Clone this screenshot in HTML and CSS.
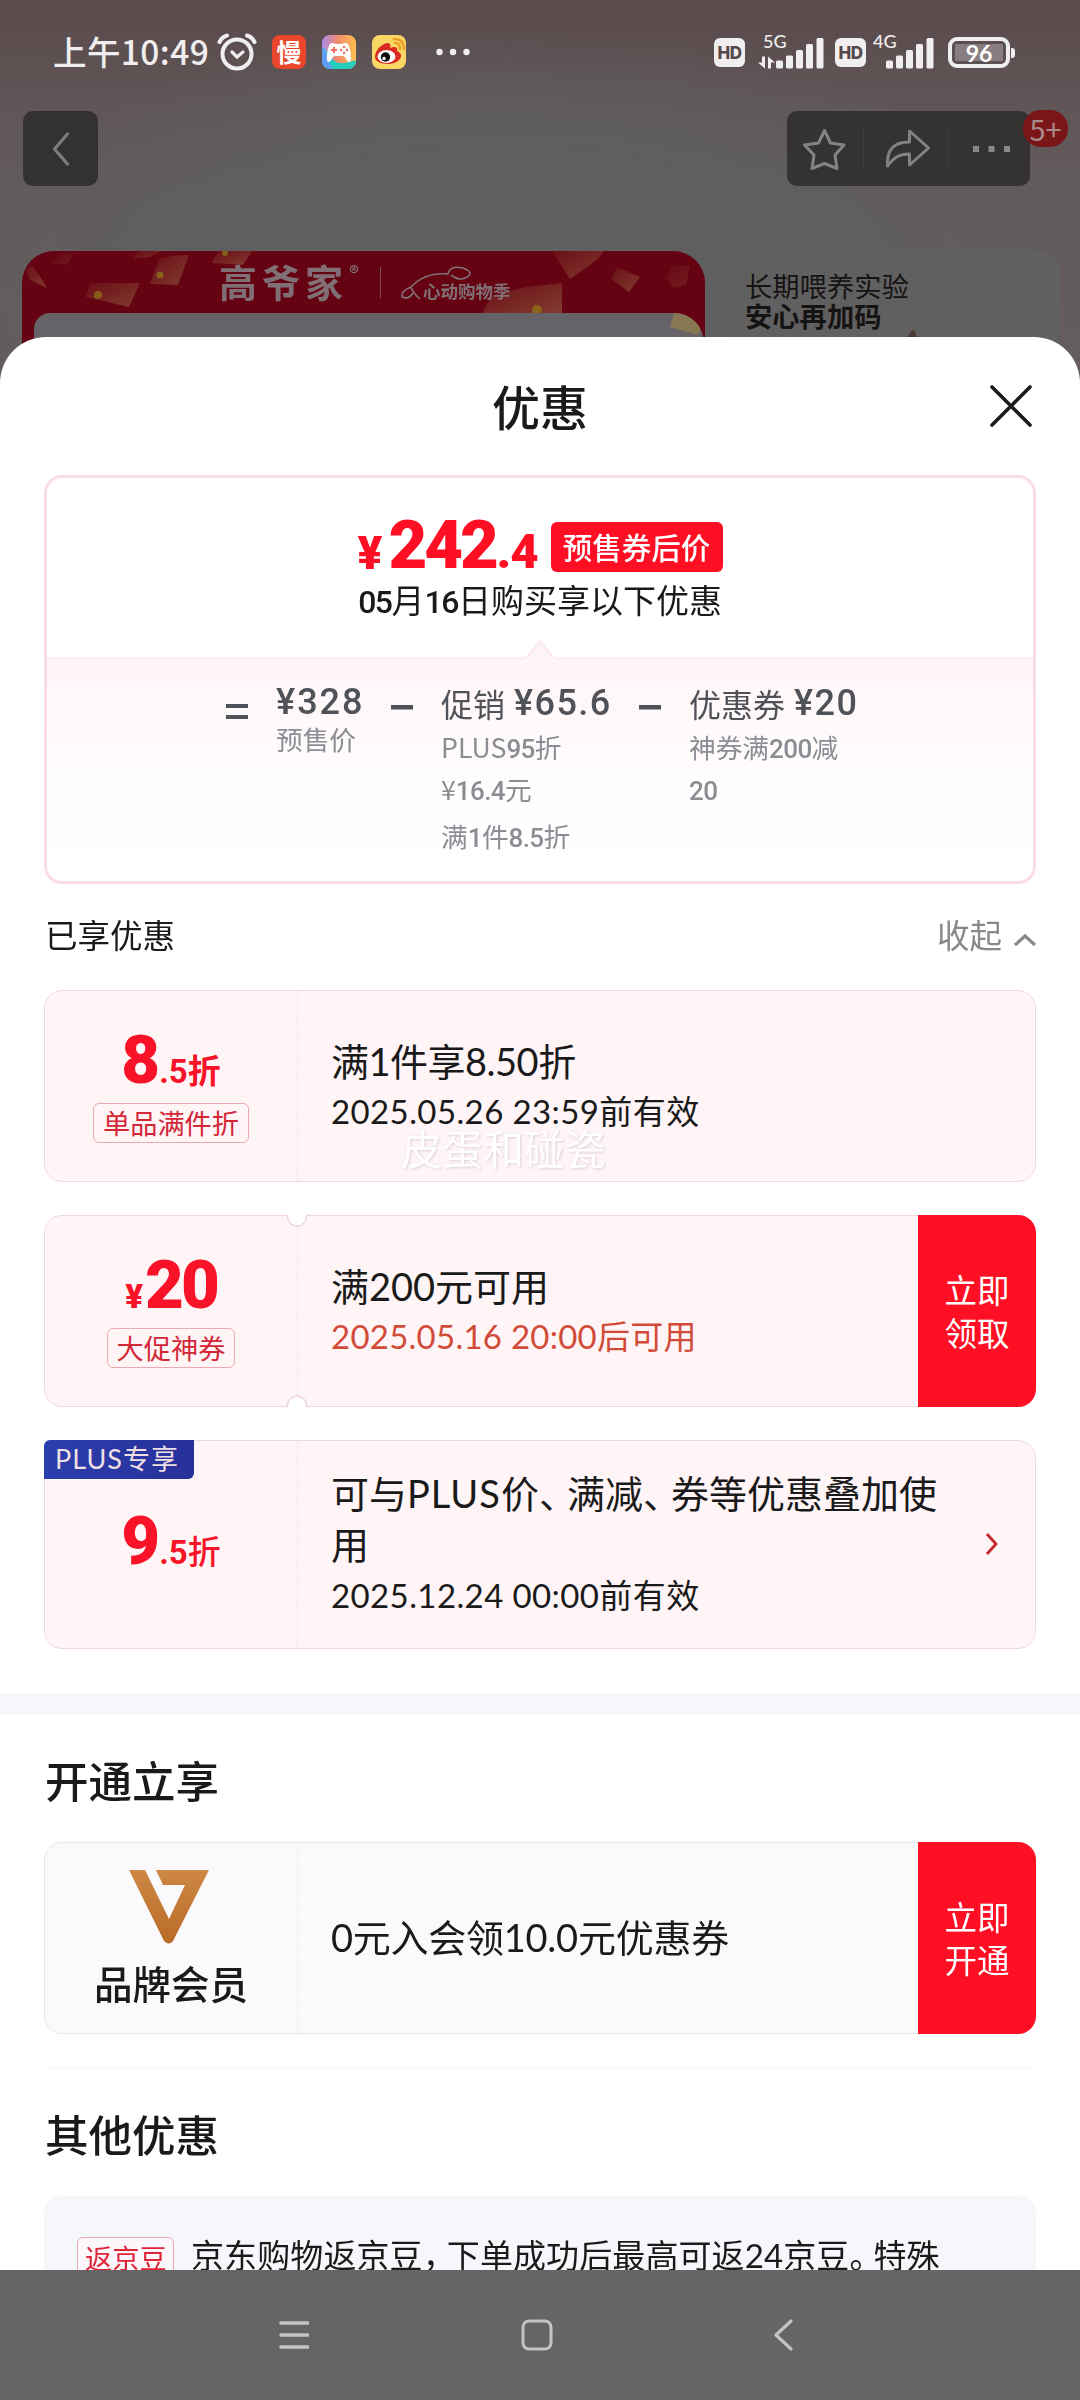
FILE: index.html
```html
<!DOCTYPE html>
<html lang="zh-CN">
<head>
<meta charset="utf-8">
<title>优惠</title>
<link rel="stylesheet" href="styles.css">
</head>
<body>
<div class="screen">
  <div class="backdrop">
    <header class="status">
      <div class="status-left">
        <span class="time">上午10:49</span>
        <svg class="alarm" width="40" height="38" viewBox="0 0 40 38" fill="none" stroke="#f0eeee" stroke-linecap="round"><circle cx="20" cy="21" r="14.5" stroke-width="4"/><path d="M2.5 9Q5 4 10 2.5M37.500 9Q35 4 30 2.500" stroke-width="4"/><path d="M15 19l5 5 6-5" stroke-width="3.200"/></svg>
        <span class="app app-slow">慢</span>
        <svg class="app" viewBox="0 0 34 34"><defs><linearGradient id="game" x1="0" y1="0" x2="1" y2="0"><stop offset="0" stop-color="#a98df0"/><stop offset=".45" stop-color="#f08a70"/><stop offset="1" stop-color="#ffbf4e"/></linearGradient></defs><rect width="34" height="34" rx="8" fill="url(#game)"/><path d="M0 13C6 13 7 27 18 28C26 29 30 25 34 26A8 8 0 0 1 26 34H8A8 8 0 0 1 0 26Z" fill="#25cdbd"/><path d="M0 12C5 14 5 25 11 34H8A8 8 0 0 1 0 26Z" fill="#5d9df5"/><path d="M10 8Q17 10 24 8C29 8 30 27 28 27C25 28 24 21 21 21H13C10 21 9 28 6 27C4 27 5 8 10 8Z" fill="#fff"/><path d="M9 15h6M12 12v6" stroke="#ef6a5a" stroke-width="2"/><g fill="#ef6a5a"><circle cx="22" cy="12" r="1.200"/><circle cx="22" cy="18" r="1.200"/><circle cx="19" cy="15" r="1.200"/><circle cx="25" cy="15" r="1.200"/></g></svg>
        <svg class="app" viewBox="0 0 34 34"><rect width="34" height="34" rx="8" fill="#f9d765"/><path d="M3 22C3 13 15 5 18 9C19 11 18 12 18 13C23 11 26 12 25 16C34 20 27 29 16 29C8 29 3 26 3 22Z" fill="#db2a22"/><ellipse cx="14.500" cy="21.500" rx="9" ry="6.500" fill="#fff"/><circle cx="13.500" cy="22" r="4.700" fill="#111"/><circle cx="12" cy="23.500" r="1.700" fill="#fff"/><path d="M23 8q5 0 5 6M22 4q10 0 10 10" fill="none" stroke="#eea02c" stroke-width="2.500" stroke-linecap="round"/></svg>
        <svg class="more" width="34" height="8" viewBox="0 0 34 8" fill="#f0eeee"><circle cx="3.500" cy="4" r="3.200"/><circle cx="17" cy="4" r="3.200"/><circle cx="30.500" cy="4" r="3.200"/></svg>
      </div>
      <div class="status-right">
        <span class="hd">HD</span>
        <span class="signal sig-a"><b>5G</b><svg width="68" height="33" viewBox="0 0 68 33" fill="#f0eeee"><path d="M5 20.500h3v12L1 26.500h4zM11 32.500V20.500l7 6h-4v6z"/><rect x="19" y="24.500" width="7" height="8" rx="1.500"/><rect x="29" y="19.500" width="7" height="13" rx="1.500"/><rect x="39" y="14" width="7" height="18.500" rx="1.500"/><rect x="49" y="8" width="7" height="24.500" rx="1.500"/><rect x="59.500" y="2" width="7" height="30.500" rx="1.500"/></svg></span>
        <span class="hd">HD</span>
        <span class="signal sig-b"><b>4G</b><svg width="68" height="33" viewBox="0 0 68 33" fill="#f0eeee"><rect x="19" y="24.500" width="7" height="8" rx="1.500"/><rect x="29" y="19.500" width="7" height="13" rx="1.500"/><rect x="39" y="14" width="7" height="18.500" rx="1.500"/><rect x="49" y="8" width="7" height="24.500" rx="1.500"/><rect x="59.500" y="2" width="7" height="30.500" rx="1.500"/></svg></span>
        <span class="battery"><i>96</i></span>
      </div>
    </header>
    <div class="toolbar">
      <div class="tool-back"><svg width="18" height="34" viewBox="0 0 18 34" fill="none" stroke="#7d7b7b" stroke-width="3.200" stroke-linecap="round" stroke-linejoin="round"><path d="M15.500 2L2.500 17l13 15"/></svg></div>
      <div class="tools">
        <svg class="tool" viewBox="0 0 76 75" fill="none" stroke="#858282" stroke-width="3" stroke-linejoin="round"><path d="M37.500 19.500L43.500 32L57 34L48 44L50 57.500L37.500 52.500L25 57.500L27 44L17.500 34L31.500 32Z"/></svg>
        <svg class="tool tool-share" viewBox="0 0 84 75" fill="none" stroke="#858282" stroke-width="3" stroke-linejoin="round"><path d="M46 20L65 37L46 54V43C35 43 30 47 24 55C23 39 30 31 46 31Z"/></svg>
        <svg class="tool tool-more" viewBox="0 0 82 75" fill="#8a8787"><path d="M25 35h6v6h-6zM40.500 35h6v6h-6zM56 35h6v6h-6z"/></svg>
        <span class="count">5+</span>
      </div>
    </div>
    <div class="feed">
      <div class="banner">
        <svg class="confetti" width="683" height="150" viewBox="0 0 683 150"><defs><linearGradient id="gold" x1="0" y1="0" x2="1" y2="1"><stop offset="0" stop-color="#6c1218"/><stop offset="1" stop-color="#8a4a38"/></linearGradient></defs><g fill="url(#gold)" opacity=".8"><path d="M64 46L68 32L118 32L107 56Z"/><path d="M128 33L137 8Q150 4 167 4L156 34Z"/><path d="M110 8L117 0H140L128 6Z" opacity=".7"/><path d="M190 12L196 0H230L221 14Z"/><path d="M4 18L10 14L19 27L25 37L8 29Z"/><path d="M30 12L40 3L52 2L44 14Z" opacity=".4"/><path d="M460 62L470 44L505 36L540 32V62Z"/><path d="M530 0H582L576 8L548 28Z"/><path d="M589 28L595 16L618 26L607 41Z"/><path d="M644 28L650 14L668 15L664 34L652 37Z" opacity=".5"/></g><g fill="#8c7018" opacity=".8"><circle cx="76" cy="44" r="4"/><circle cx="138" cy="24" r="3.500"/><circle cx="203" cy="2" r="3"/><circle cx="515" cy="59" r="5"/></g></svg>
        <div class="brand"><strong>高爷家</strong><sup>®</sup><span class="rule"></span><span class="season"><svg width="82" height="36" viewBox="0 0 82 36" fill="none" stroke="#807078" stroke-width="1.600"><path d="M19 34Q12 28 10 22Q0 26 1 32Q8 35 12 28M10 22Q24 7 47 9Q49 0 62 3Q75 8 64 13Q58 16 50 10"/></svg><em>心动购物季</em></span></div>
        <div class="banner-panel"><svg width="34" height="24" viewBox="0 0 34 24"><path d="M4 0H20L32 12L28 22L0 14Z" fill="#877753"/></svg></div>
      </div>
      <div class="promo"><p>长期喂养实验</p><strong>安心再加码</strong><svg width="14" height="12" viewBox="0 0 14 12"><path d="M0 12Q4 0 8 1L13 12Z" fill="#4b3c36"/></svg></div>
    </div>
  </div>

  <main class="sheet">
    <div class="sheet-head"><h1>优惠</h1><svg class="close" width="44" height="44" viewBox="0 0 44 44" fill="none" stroke="#1a1a1a" stroke-width="3.600" stroke-linecap="round"><path d="M3 3l38 38M41 3L3 41"/></svg></div>

    <section class="summary">
      <div class="final"><span class="final-yen">¥</span><span class="final-int">242</span><span class="final-dec">.4</span><span class="final-tag">预售券后价</span></div>
      <p class="when"><b>05</b>月<b>16</b>日购买享以下优惠</p>
      <div class="formula">
        <svg class="pointer" width="32" height="21" viewBox="0 0 32 21"><path d="M1 20L16 2L31 20" fill="#fef3f5" stroke="#fdeaee" stroke-width="2"/><path d="M0 20h32" stroke="#fef2f5" stroke-width="3"/></svg>
        <span class="op op-eq"><svg width="24" height="18" viewBox="0 0 24 18" fill="#505259"><path d="M1 1h22v4H1zM1 12h22v4H1z"/></svg></span>
        <div class="term"><p class="amount"><b>¥328</b></p><p class="note">预售价</p></div>
        <span class="op"><svg width="22" height="5" viewBox="0 0 22 5"><path d="M0 0h22v4.500H0z" fill="#505259"/></svg></span>
        <div class="term term-b"><p class="amount">促销<b>¥65.6</b></p><p class="note">PLUS<b>95</b>折</p><p class="note">¥<b>16.4</b>元</p><p class="note note-last">满<b>1</b>件<b>8.5</b>折</p></div>
        <span class="op"><svg width="22" height="5" viewBox="0 0 22 5"><path d="M0 0h22v4.500H0z" fill="#505259"/></svg></span>
        <div class="term term-b"><p class="amount">优惠券<b>¥20</b></p><p class="note">神券满<b>200</b>减</p><p class="note"><b>20</b></p></div>
      </div>
    </section>

    <div class="list-head"><span>已享优惠</span><span class="fold">收起<svg width="24" height="14" viewBox="0 0 24 14" fill="none" stroke="#888" stroke-width="3.200"><path d="M2 12L12 3l10 9"/></svg></span></div>

    <article class="coupon">
      <div class="face"><div class="value"><b>8</b><small>.5折</small></div><span class="label">单品满件折</span></div>
      <div class="info"><h3 class="tight">满1件享8.50折</h3><p>2025.05.26 23:59前有效</p></div>
      <span class="watermark">皮蛋和碰瓷</span>
    </article>

    <article class="coupon notched">
      <div class="face"><div class="value"><small class="yen">¥</small><b>20</b></div><span class="label">大促神券</span></div>
      <div class="info"><h3>满200元可用</h3><p class="pending">2025.05.16 20:00后可用</p></div>
      <div class="action"><span>立即</span><span>领取</span></div>
      <svg class="notch notch-top" width="22" height="14" viewBox="0 0 22 14"><path d="M0 0V1.500Q1 1.500 1.500 3.500A9.500 9.500 0 0 0 20.500 3.500Q21 1.500 22 1.500V0Z" fill="#fff"/><path d="M0 1.800Q1 1.800 1.500 3.500A9.500 9.500 0 0 0 20.500 3.500Q21 1.800 22 1.800" fill="none" stroke="#f0d4da" stroke-width="1.500"/></svg>
      <svg class="notch notch-bottom" width="22" height="14" viewBox="0 0 22 14"><path d="M0 0V1.500Q1 1.500 1.500 3.500A9.500 9.500 0 0 0 20.500 3.500Q21 1.500 22 1.500V0Z" fill="#fff"/><path d="M0 1.800Q1 1.800 1.500 3.500A9.500 9.500 0 0 0 20.500 3.500Q21 1.800 22 1.800" fill="none" stroke="#f0d4da" stroke-width="1.500"/></svg>
    </article>

    <article class="coupon tall">
      <span class="flag">PLUS专享</span>
      <div class="face"><div class="value"><b>9</b><small>.5<i>折</i></small></div></div>
      <div class="info"><h3>可与<span class="wide">PLUS</span>价<span class="pause">、</span>满减<span class="pause">、</span>券等优惠叠加使用</h3><p>2025.12.24 00:00前有效</p></div>
      <svg class="go" width="14" height="24" viewBox="0 0 14 24" fill="none" stroke="#c4242c" stroke-width="2.800"><path d="M2 2l9 10-9 10"/></svg>
    </article>

    <div class="band"></div>

    <h2 class="title-open">开通立享</h2>
    <article class="coupon member">
      <div class="face"><svg class="v" width="80" height="75" viewBox="0 0 80 75"><defs><linearGradient id="bronze" x1="0" y1="0" x2="0" y2="1"><stop offset="0" stop-color="#cd8844"/><stop offset="1" stop-color="#b96b28"/></linearGradient></defs><path d="M0 0H16L40 49L56 15H34L27 0H80L44 71Q40 76 35 71Z" fill="url(#bronze)"/></svg><strong>品牌会员</strong></div>
      <div class="info"><h3 class="snug">0元入会领10.0元优惠券</h3></div>
      <div class="action"><span>立即</span><span>开通</span></div>
    </article>
    <hr>
    <h2 class="title-other">其他优惠</h2>
    <div class="other"><span class="label">返京豆</span><p>京东购物返京豆<span class="stop">，</span>下单成功后最高可返24京豆<span class="stop">。</span>特殊</p></div>
  </main>

  <nav class="nav">
    <svg width="32" height="32" viewBox="0 0 32 32" stroke="#c4c4c4" stroke-width="3.500" stroke-linecap="round"><path d="M4 4h27M4 16h27M4 28h27"/></svg>
    <svg width="32" height="32" viewBox="0 0 32 32" fill="none" stroke="#c4c4c4" stroke-width="3"><rect x="2" y="2" width="28" height="28" rx="6"/></svg>
    <svg width="32" height="32" viewBox="0 0 32 32" fill="none" stroke="#c4c4c4" stroke-width="3.200" stroke-linecap="round" stroke-linejoin="round"><path d="M26 2L11 16l15 14"/></svg>
  </nav>
</div>
</body>
</html>
```

FILE: styles.css
```css
* { box-sizing: border-box; margin: 0; padding: 0; }
body { width: 1080px; height: 2400px; overflow: hidden; font-family: Lato, "Noto Sans CJK SC", sans-serif; color: #1a1a1a; background: #656565; }
svg { display: block; flex: none; }
.screen { display: flex; flex-direction: column; height: 2400px; }

/* dimmed page behind the sheet */
.backdrop { flex: none; height: 400px; overflow: hidden; background: radial-gradient(ellipse 560px 260px at 500px 290px, #5f5f5f 0 50%, rgba(95,95,95,0) 100%), linear-gradient(#5a4a4c, #605657 110px, #625b5c 200px, #645c5e); }
.status { display: flex; justify-content: space-between; height: 104px; padding: 0 66px 0 53px; align-items: center; color: #f0eeee; }
.status-left, .status-right { display: flex; align-items: center; height: 36px; }
.time { width: 157px; font-size: 33.500px; line-height: 34px; margin-top: -2px; letter-spacing: .4px; white-space: nowrap; font-weight: 500; font-family: "Noto Sans CJK SC", sans-serif; }
.alarm { margin-left: 7px; }
.app { width: 34px; height: 34px; margin-left: 16px; }
.alarm + .app { margin-left: 15px; }
.app-slow { border-radius: 8px; background: #e9462c; color: #fff; font: 700 25px/33px "Noto Sans CJK SC", sans-serif; text-align: center; }
.more { margin-left: 30px; }
.hd { width: 31px; height: 29px; border-radius: 6px; background: #f0eeee; color: #57494b; font: 800 17px/30px Inter, sans-serif; text-align: center; letter-spacing: -.5px; }
.signal { position: relative; height: 33px; }
.sig-a { margin: 0 10px 0 12px; }
.sig-b { margin: 0 13px 0 1px; }
.signal b { position: absolute; left: 6px; top: -5px; font: 500 18px/20px Lato, sans-serif; }
.battery { position: relative; width: 62px; height: 31px; border: 4px solid #f0eeee; border-radius: 9px; display: flex; padding: 3px; margin-right: 4px; }
.battery i { flex: 1; background: #887d7f; font: 700 23px/18px Lato, sans-serif; text-align: center; color: #fff; }
.battery::after { content: ""; position: absolute; right: -9px; top: 7px; width: 4px; height: 10px; border-radius: 0 3px 3px 0; background: #f0eeee; }

.toolbar { display: flex; justify-content: space-between; padding: 7px 50px 0 23px; }
.tool-back { width: 75px; height: 75px; border-radius: 10px; background: #343131; display: flex; align-items: center; justify-content: center; }
.tools { position: relative; display: flex; width: 243px; height: 75px; border-radius: 10px; background: #353232; }
.tool { width: 76px; height: 75px; }
.tool-share { width: 85px; background: linear-gradient(#403d3d, #403d3d) 0 17px/1px 43px no-repeat, linear-gradient(#403d3d, #403d3d) 100% 17px/1px 43px no-repeat; }
.tool-more { width: 82px; }
.count { position: absolute; left: 236px; top: -1px; width: 45px; height: 37px; border-radius: 18px; background: #7a1518; color: #a98a8b; font: 400 29px/37px "Noto Sans CJK SC", sans-serif; text-align: center; }

.feed { display: flex; gap: 22px; padding: 65px 20px 0 22px; }
.banner { position: relative; width: 683px; height: 150px; border-radius: 32px 32px 0 0; background: #650312; overflow: hidden; display: flex; flex-direction: column; }
.confetti { position: absolute; left: 0; top: 0; }
.brand { position: relative; height: 62px; display: flex; align-items: flex-start; padding-left: 197px; color: #806f75; }
.brand strong { font: 700 38px/60px "Noto Sans CJK SC", sans-serif; letter-spacing: 5px; width: 128px; white-space: nowrap; }
.brand sup { font: 700 15px/16px Inter, sans-serif; margin: 12px 0 0 2px; width: 13px; }
.rule { width: 1px; height: 31px; background: #755461; margin: 16px 18px 0 18px; }
.season { position: relative; padding-top: 14px; margin-left: 2px; }
.season em { position: absolute; left: 22px; top: 31px; font: 700 17.500px/18px "Noto Sans CJK SC", sans-serif; white-space: nowrap; }
.banner-panel { position: relative; height: 88px; margin: 0 1px 0 12px; border-radius: 16px 30px 0 0; background: #656367; display: flex; justify-content: flex-end; overflow: hidden; }
.promo { width: 333px; height: 150px; border-radius: 20px 20px 0 0; background: #616061; padding: 16px 18px; color: #161313; font: 27.300px/36px "Noto Sans CJK SC", sans-serif; }
.promo strong { display: block; font-weight: 700; line-height: 25px; }
.promo svg { margin: 1px 0 0 161px; }

/* sheet */
.sheet { position: relative; flex: 1; min-height: 0; margin-top: -63px; padding: 0 44px; overflow: hidden; background: #fff; border-radius: 46px 46px 0 0; }
.sheet-head { position: relative; height: 138px; }
h1 { font: 500 48px/137px "Noto Sans CJK SC", sans-serif; text-align: center; }
.close { position: absolute; right: 3px; top: 47px; }
.summary { height: 409px; border: 3px solid #f9dde3; border-radius: 18px; overflow: hidden; }
.final { display: flex; justify-content: center; height: 96px; padding-top: 34px; color: #fe0f23; font-family: Roboto, sans-serif; font-weight: 900; line-height: 66px; }
.final-yen { font-size: 46px; line-height: 82px; width: 29px; }
.final-int { font-size: 67px; letter-spacing: -3px; margin-left: 2px; width: 108px; }
.final-dec { font-size: 49px; line-height: 79px; letter-spacing: -1px; }
.final-tag { margin: 10px 0 0 13px; width: 172px; height: 50px; border-radius: 6px; background: #fe0f23; color: #fff; font: 500 29.500px/48px "Noto Sans CJK SC", sans-serif; text-align: center; }
.when { text-align: center; font-size: 33px; line-height: 52px; }
.when b { font: 500 32px/52px Roboto, sans-serif; letter-spacing: -1.500px; }
.formula { position: relative; display: flex; height: 226px; margin-top: 29px; padding: 24px 0 0 178px; border-top: 3px solid #fdedf0; background: linear-gradient(#fff5f7, #fffcfc 50%, #fff); color: #505259; white-space: nowrap; }
.pointer { position: absolute; left: 477px; top: -21px; }
.op { width: 50px; padding-top: 21px; }
.op-eq { width: 51px; padding-top: 19px; }
.term { width: 115px; }
.term-b { width: 198px; padding-top: 1px; }
.amount { font-size: 32px; line-height: 40px; height: 42px; display: flex; }
.amount b { font: 500 36px/37px Roboto, sans-serif; letter-spacing: 1.400px; margin-left: 9px; }
.term:not(.term-b) .amount { height: 35px; }
.term:not(.term-b) .amount b { margin-left: 0; letter-spacing: 2px; }
.note { font: 26.700px/40px "Noto Sans CJK SC", sans-serif; color: #8b8d95; }
.note b { font: 500 26px/40px Roboto, sans-serif; letter-spacing: -.6px; }
.note-last { padding-top: 5px; }

.list-head { display: flex; justify-content: space-between; height: 106px; padding-left: 1px; font-size: 32.500px; line-height: 104px; }
.fold { color: #888; display: flex; }
.fold svg { margin: 49px -1px 0 11px; }

.coupon { position: relative; display: flex; width: 992px; height: 192px; margin-bottom: 33px; border: 1.500px solid #efd9dd; border-radius: 18px; background: #fff5f6; }
.face { flex: none; width: 253px; border-right: 1.500px dashed #f3e2e5; display: flex; flex-direction: column; align-items: center; padding-top: 39px; }
.value { height: 60px; display: flex; align-items: baseline; color: #f81328; font-family: Roboto, "Noto Sans CJK SC", sans-serif; }
.value b { font-size: 67px; line-height: 60px; font-weight: 900; letter-spacing: -3px; }
.value small { font-size: 33px; line-height: 36px; font-weight: 700; margin-left: 2px; }
.value small.yen { margin: 0 2px 0 0; font-weight: 900; }
.value i { font-style: normal; font-weight: 500; }
.label { height: 40px; margin-top: 13px; padding: 0 9px; border: 1.500px solid #eba9b4; border-radius: 6px; font: 27.200px/36px "Noto Sans CJK SC", sans-serif; color: #d32738; }
.info { flex: 1; padding-left: 33px; display: flex; flex-direction: column; justify-content: center; }
h3 { font-weight: 400; font-size: 38px; line-height: 50px; }
.tight { letter-spacing: -.5px; }
.snug { letter-spacing: -.25px; }
.wide { letter-spacing: 1px; }
.info p { font-size: 33px; line-height: 50px; letter-spacing: .4px; }
.info .pending { color: #d24b38; letter-spacing: .25px; }
.action { width: 118px; margin: -1px; border-radius: 0 18px 18px 0; background: #fe0f23; color: #fff; font: 32.500px/43px "Noto Sans CJK SC", sans-serif; text-align: center; display: flex; flex-direction: column; justify-content: center; padding-bottom: 2px; }
.watermark { position: absolute; left: 356px; top: 129px; font: 41px/54px "Noto Sans CJK SC", sans-serif; color: #fff; text-shadow: 1px 1px 3px #dfcfd2; }
.notch { position: absolute; left: 241px; }
.notch-top { top: -3px; }
.notch-bottom { bottom: -3px; transform: scaleY(-1); }
.tall { height: 209px; margin-bottom: 44px; }
.tall .value { margin-top: 31px; }
.tall h3, .tall .info p { line-height: 51px; }
.tall .info { padding-right: 90px; flex: none; width: 737px; }
.pause { margin-right: -10px; }
.stop { margin-right: -9px; }
.flag { position: absolute; left: -1px; top: -1px; width: 150px; height: 39px; border-radius: 6px 0 6px 0; background: linear-gradient(90deg, #2a3fae, #28309a); color: #f0dfe3; font: 27px/38px Lato, "Noto Sans CJK SC", sans-serif; letter-spacing: 1px; padding-left: 11px; white-space: nowrap; }
.go { position: absolute; right: 36px; top: 91px; }
.band { height: 22px; margin: 0 -44px; background: #f6f7fb; }
h2 { padding-left: 1px; font: 500 43.500px/129px "Noto Sans CJK SC", sans-serif; }
.title-open { height: 127px; }
.member { background: #fafafc; border-color: #e6e6ea; margin-bottom: 33px; }
.member .face { padding-top: 27px; border-color: #ededf1; }
.v { margin-right: 4px; }
.member strong { font: 500 38.500px/60px "Noto Sans CJK SC", sans-serif; margin-top: 7px; }
.member h3 { padding-bottom: 2px; }
hr { border: 0; height: 1px; background: #f8f8fa; }
.title-other { height: 128px; line-height: 131px; }
.other { height: 140px; border-radius: 18px; background: #f6f7fb; display: flex; padding: 41px 32px 0 33px; white-space: nowrap; }
.other .label { margin: 0; height: 44px; line-height: 38px; color: #e02438; background: #fbf7fa; width: 97px; padding: 0 7px; }
.other p { margin-left: 17px; font-size: 33px; line-height: 36px; letter-spacing: .1px; }

.nav { position: relative; flex: none; height: 130px; background: #656565; display: flex; gap: 212px; padding: 49px 0 0 277px; }
```
